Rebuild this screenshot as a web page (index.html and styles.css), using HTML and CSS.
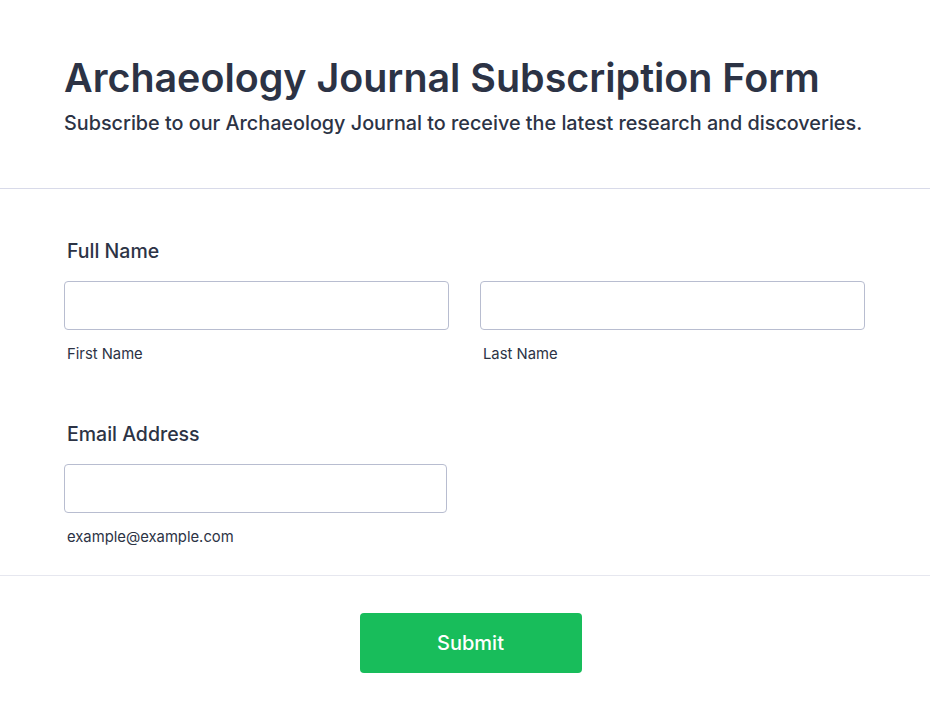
FILE: index.html
```html
<!DOCTYPE html>
<html>
<head>
<meta charset="utf-8">
<link rel="stylesheet" href="styles.css">
</head>
<body>
<div class="page">
  <header class="header">
    <h1 class="title">Archaeology Journal Subscription Form</h1>
    <p class="subtitle">Subscribe to our Archaeology Journal to receive the latest research and discoveries.</p>
  </header>
  <section class="fields">
    <div class="field">
      <div class="label">Full Name</div>
      <div class="row">
        <div class="col">
          <input class="input" type="text">
          <div class="sublabel">First Name</div>
        </div>
        <div class="col">
          <input class="input" type="text">
          <div class="sublabel">Last Name</div>
        </div>
      </div>
    </div>
    <div class="field email">
      <div class="label">Email Address</div>
      <div class="col narrow">
        <input class="input" type="email">
        <div class="sublabel">example@example.com</div>
      </div>
    </div>
  </section>
  <footer class="actions">
    <button class="submit" type="button">Submit</button>
  </footer>
</div>
</body>
</html>
```
FILE: styles.css
```css
* { box-sizing: border-box; }
html, body { margin: 0; padding: 0; background: #fff; }
body { font-family: Inter, "Noto Sans", sans-serif; color: #2c3345; }
.page { width: 930px; }
.header {
  padding: 54px 64px 51px;
  border-bottom: 1px solid #d8dae9;
}
.title {
  margin: 0;
  font-size: 39.4px;
  line-height: 48px;
  font-weight: 600;
  color: #2c3345;
}
.subtitle {
  margin: 7px 0 0;
  font-size: 19.8px;
  line-height: 28px;
  font-weight: 500;
  color: #2c3345;
}
.fields { padding: 49px 64px 29px; border-bottom: 1px solid #e6e7ef; }
.field.email { margin-top: 58px; }
.label {
  font-size: 19.5px;
  line-height: 27px;
  font-weight: 500;
  padding-left: 3px;
  margin-bottom: 16px;
}
.row { display: flex; gap: 31px; }
.col { width: 385px; }
.col.narrow { width: 383px; }
.input {
  display: block;
  width: 100%;
  height: 49px;
  border: 1px solid #b8bdd0;
  border-radius: 4px;
  background: #fff;
  margin: 0;
}
.sublabel {
  font-size: 14.8px;
  line-height: 18px;
  margin-top: 15px;
  padding-left: 3px;
  color: #2c3345;
}
.actions { display: flex; justify-content: center; padding: 37px 0 40px; }
.submit {
  width: 222px;
  height: 60px;
  margin-left: 11px;
  background: #18bd5b;
  border: none;
  border-radius: 4px;
  color: #fff;
  font-family: Inter, sans-serif;
  font-size: 20px;
  font-weight: 500;
}
```
